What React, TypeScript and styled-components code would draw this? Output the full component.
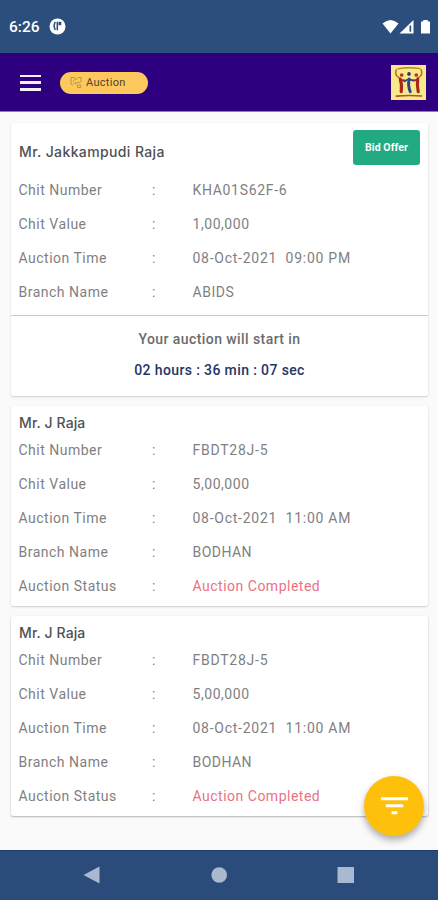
import React from 'react';
import styled, { createGlobalStyle } from 'styled-components';

const Global = createGlobalStyle`
  *, *::before, *::after { box-sizing: border-box; }
  html, body { margin: 0; padding: 0; }
  body { font-family: Roboto, "Liberation Sans", sans-serif; }
`;

const Screen = styled.div`
  width: 438px;
  height: 900px;
  display: flex;
  flex-direction: column;
  background: #fafafb;
  overflow: hidden;
  position: relative;
`;

const StatusBar = styled.div`
  height: 53px;
  flex: none;
  display: flex;
  align-items: center;
  padding: 0 7px 0 9px;
  background: #2b4e7c;
  color: #fff;
`;

const Clock = styled.span`
  font-size: 15.5px;
  font-weight: 500;
  letter-spacing: 0;
  line-height: 20px;
  width: 40px;
`;

const StatusIcons = styled.svg`
  margin-left: auto;
`;

const Header = styled.header`
  height: 59px;
  flex: none;
  display: flex;
  align-items: center;
  padding: 1px 12px 0 20px;
  background: #2e0080;
  border-bottom: 1px solid #8d7db8;
`;

const MenuButton = styled.button`
  width: 21px;
  height: 16px;
  padding: 0;
  border: 0;
  background: none;
  display: flex;
  flex-direction: column;
  justify-content: space-between;
`;

const MenuLine = styled.span`
  height: 2.6px;
  width: 21px;
  background: #f4f1fa;
`;

const Pill = styled.div`
  width: 88px;
  height: 22px;
  margin-left: 19px;
  padding-left: 10px;
  display: flex;
  align-items: center;
  gap: 4px;
  border-radius: 11px;
  background: #fdc95c;
  color: #54402f;
  font-size: 11px;
  line-height: 22px;
  letter-spacing: 0.3px;
`;

const Logo = styled.svg`
  margin-left: auto;
`;

const List = styled.main`
  flex: 1;
  padding: 11px 10px 0 11px;
`;

const Card = styled.section<{ $height: number; $gap: number; $raised?: boolean }>`
  height: ${(p) => p.$height}px;
  margin-bottom: ${(p) => p.$gap}px;
  border-radius: 2px;
  background: #fff;
  box-shadow: 0 1px 2px rgba(0, 0, 0, ${(p) => (p.$raised ? 0.28 : 0.17)}),
    0 0 1px rgba(0, 0, 0, 0.08);
`;

const CardHead = styled.div<{ $tall?: boolean }>`
  height: ${(p) => (p.$tall ? 50 : 27)}px;
  padding: ${(p) => (p.$tall ? '7px 8px 0' : '7px 8px 0')};
  display: flex;
  justify-content: space-between;
  align-items: flex-start;
`;

const Name = styled.h2<{ $tall?: boolean }>`
  margin: ${(p) => (p.$tall ? '12px' : '0')} 0 0;
  font-family: Inter, Roboto, sans-serif;
  font-size: 14px;
  line-height: 20px;
  font-weight: 500;
  letter-spacing: ${(p) => (p.$tall ? 0.38 : 0.1)}px;
  color: #505054;
`;

const BidButton = styled.button`
  width: 67px;
  height: 35px;
  padding: 0;
  border: 0;
  border-radius: 3px;
  background: #22ab82;
  color: #fff;
  font: 700 10.5px/35px Roboto, sans-serif;
  letter-spacing: 0.1px;
`;

const Row = styled.div`
  height: 34px;
  padding-left: 7.5px;
  display: grid;
  grid-template-columns: 133.5px 40.5px 1fr;
  align-items: center;
  color: #7f7f82;
  font-size: 14px;
  letter-spacing: 0.5px;
  white-space: pre;
`;

const Value = styled.span<{ $alert?: boolean; $tracking: number }>`
  color: ${(p) => (p.$alert ? '#ea7284' : 'inherit')};
  letter-spacing: ${(p) => p.$tracking}px;
`;

const Countdown = styled.div`
  margin-top: 6px;
  padding-top: 13px;
  border-top: 1px solid #c5cccc;
  text-align: center;
  font-weight: 500;
  font-size: 14px;
  line-height: 20px;
  color: #6b6b6e;
  letter-spacing: 0.42px;
`;

const Remaining = styled.div`
  margin-top: 11px;
  color: #233466;
  letter-spacing: 0.38px;
`;

const Fab = styled.button`
  position: absolute;
  left: 364px;
  top: 776px;
  width: 60px;
  height: 60px;
  padding: 0;
  border: 0;
  border-radius: 50%;
  background: #ffc00c;
  display: grid;
  place-items: center;
  box-shadow: 0 4px 7px rgba(0, 0, 0, 0.32);
`;

const NavBar = styled.nav`
  height: 50px;
  flex: none;
  display: flex;
  justify-content: space-between;
  align-items: center;
  padding: 0 83px 2px;
  background: #2b4c7b;
  border-top: 1px solid #153d70;
`;

type Field = { label: string; value: string; tracking: number; alert?: boolean };

const upcoming: Field[] = [
  { label: 'Chit Number', value: 'KHA01S62F-6', tracking: 0.68 },
  { label: 'Chit Value', value: '1,00,000', tracking: 0.55 },
  { label: 'Auction Time', value: '08-Oct-2021  09:00 PM', tracking: 0.74 },
  { label: 'Branch Name', value: 'ABIDS', tracking: 0.55 },
];

const completed: Field[] = [
  { label: 'Chit Number', value: 'FBDT28J-5', tracking: 0.75 },
  { label: 'Chit Value', value: '5,00,000', tracking: 0.55 },
  { label: 'Auction Time', value: '08-Oct-2021  11:00 AM', tracking: 0.74 },
  { label: 'Branch Name', value: 'BODHAN', tracking: 0.45 },
  { label: 'Auction Status', value: 'Auction Completed', tracking: 0.5, alert: true },
];

const Fields = ({ items }: { items: Field[] }) => (
  <>
    {items.map((f) => (
      <Row key={f.label}>
        <span>{f.label}</span>
        <span>:</span>
        <Value $alert={f.alert} $tracking={f.tracking}>
          {f.value}
        </Value>
      </Row>
    ))}
  </>
);

export default function App() {
  return (
    <>
      <Global />
      <Screen>
        <StatusBar>
          <Clock>6:26</Clock>
          <svg width="17" height="17" viewBox="0 0 17 17">
            <circle cx="8.5" cy="8.5" r="8" fill="#fff" />
            <path d="M6.3 3.800C5 6 5 9.500 6.300 12M8.300 3.800v8.400" fill="none" stroke="#2b4e7c" strokeWidth="1.500" />
            <path d="M9.500 3.800h2.800v3.400H9.500z" fill="#2b4e7c" />
          </svg>
          <StatusIcons width="50" height="16" viewBox="0 0 50 16">
            <path d="M1.5 4.6Q9.5-2.4 17.5 4.6L9.5 14.5Z" fill="#fff" />
            <path d="M18.5 14.5 32.5 1V14.5Z" fill="#fff" />
            <path d="M28.5 6.5h1.7v6.2h-1.7z" fill="#2b4e7c" />
            <path d="M40 2.5h2.2V1h4.6v1.5H49V14.6H40Z" fill="#fff" />
          </StatusIcons>
        </StatusBar>
        <Header>
          <MenuButton aria-label="Menu">
            <MenuLine />
            <MenuLine />
            <MenuLine />
          </MenuButton>
          <Pill>
            <svg width="12" height="13" viewBox="0 0 12 13" fill="none" stroke="#b58c55" strokeWidth="0.9">
              <path d="M1 1.500V8l2 1.300M1 1.500h3.500l1 1.500M3 5l3-2.500 1 1.500M3 7h3.500M7.500 1.500h3.500v4.500M5 8.500l3-2.500 2.500 1.200M7.500 9h3.200v2.500H7.400z" />
            </svg>
            Auction
          </Pill>
          <Logo width="35" height="35" viewBox="0 0 36 36" fill="none" strokeLinecap="round">
            <rect width="36" height="36" fill="#f8e98c" />
            <path d="M7 4Q18 1.800 30 3.800" stroke="#b98a2c" strokeWidth="1.400" />
            <path d="M9 13.500Q3 10 5.500 5M27.500 13.500Q33.500 10 31 5" stroke="#bd6a22" strokeWidth="1.500" />
            <circle cx="11" cy="10.300" r="1.900" fill="#b03a1d" />
            <circle cx="18.500" cy="9.200" r="1.900" fill="#26366f" />
            <circle cx="26" cy="10.300" r="1.900" fill="#b03a1d" />
            <path d="M9.500 14.500Q11.500 20 10.500 27.500M27.500 14.500Q26.500 20 28 27.500" stroke="#a92818" strokeWidth="3.200" />
            <path d="M10 15.500l4 .5M27 15.500l-4 .5" stroke="#a92818" strokeWidth="2" />
            <path d="M18.800 14.500Q17 20 19.800 27.500" stroke="#30438a" strokeWidth="3" />
            <path d="M14 16.800l4-2.300 4.500 1.300" stroke="#30438a" strokeWidth="1.800" />
            <path d="M5.500 32Q18 30.800 31.500 31.800" stroke="#b65123" strokeWidth="1.600" />
          </Logo>
        </Header>
        <List>
          <Card $height={273} $gap={10}>
            <CardHead $tall>
              <Name $tall>Mr. Jakkampudi Raja</Name>
              <BidButton>Bid Offer</BidButton>
            </CardHead>
            <Fields items={upcoming} />
            <Countdown>
              Your auction will start in
              <Remaining>02 hours : 36 min : 07 sec</Remaining>
            </Countdown>
          </Card>
          <Card $height={200} $gap={10}>
            <CardHead>
              <Name>Mr. J Raja</Name>
            </CardHead>
            <Fields items={completed} />
          </Card>
          <Card $height={200} $gap={0} $raised>
            <CardHead>
              <Name>Mr. J Raja</Name>
            </CardHead>
            <Fields items={completed} />
          </Card>
        </List>
        <NavBar>
          <svg width="17" height="18" viewBox="0 0 17 18">
            <path d="M.5 9 16.500 .5v17Z" fill="#a9b9cf" />
          </svg>
          <svg width="17" height="18" viewBox="0 0 17 18">
            <circle cx="9.200" cy="9" r="7.800" fill="#a9b9cf" />
          </svg>
          <svg width="18" height="18" viewBox="0 0 18 18">
            <rect x="0.500" y="1" width="16.500" height="16" fill="#a9b9cf" />
          </svg>
        </NavBar>
        <Fab aria-label="Filter">
          <svg width="27" height="18" viewBox="0 0 28 18" fill="#fff">
            <path d="M0 0h28v3H0zM5 7.300h18v3H5zM11 14.500h6v3h-6z" />
          </svg>
        </Fab>
      </Screen>
    </>
  );
}
